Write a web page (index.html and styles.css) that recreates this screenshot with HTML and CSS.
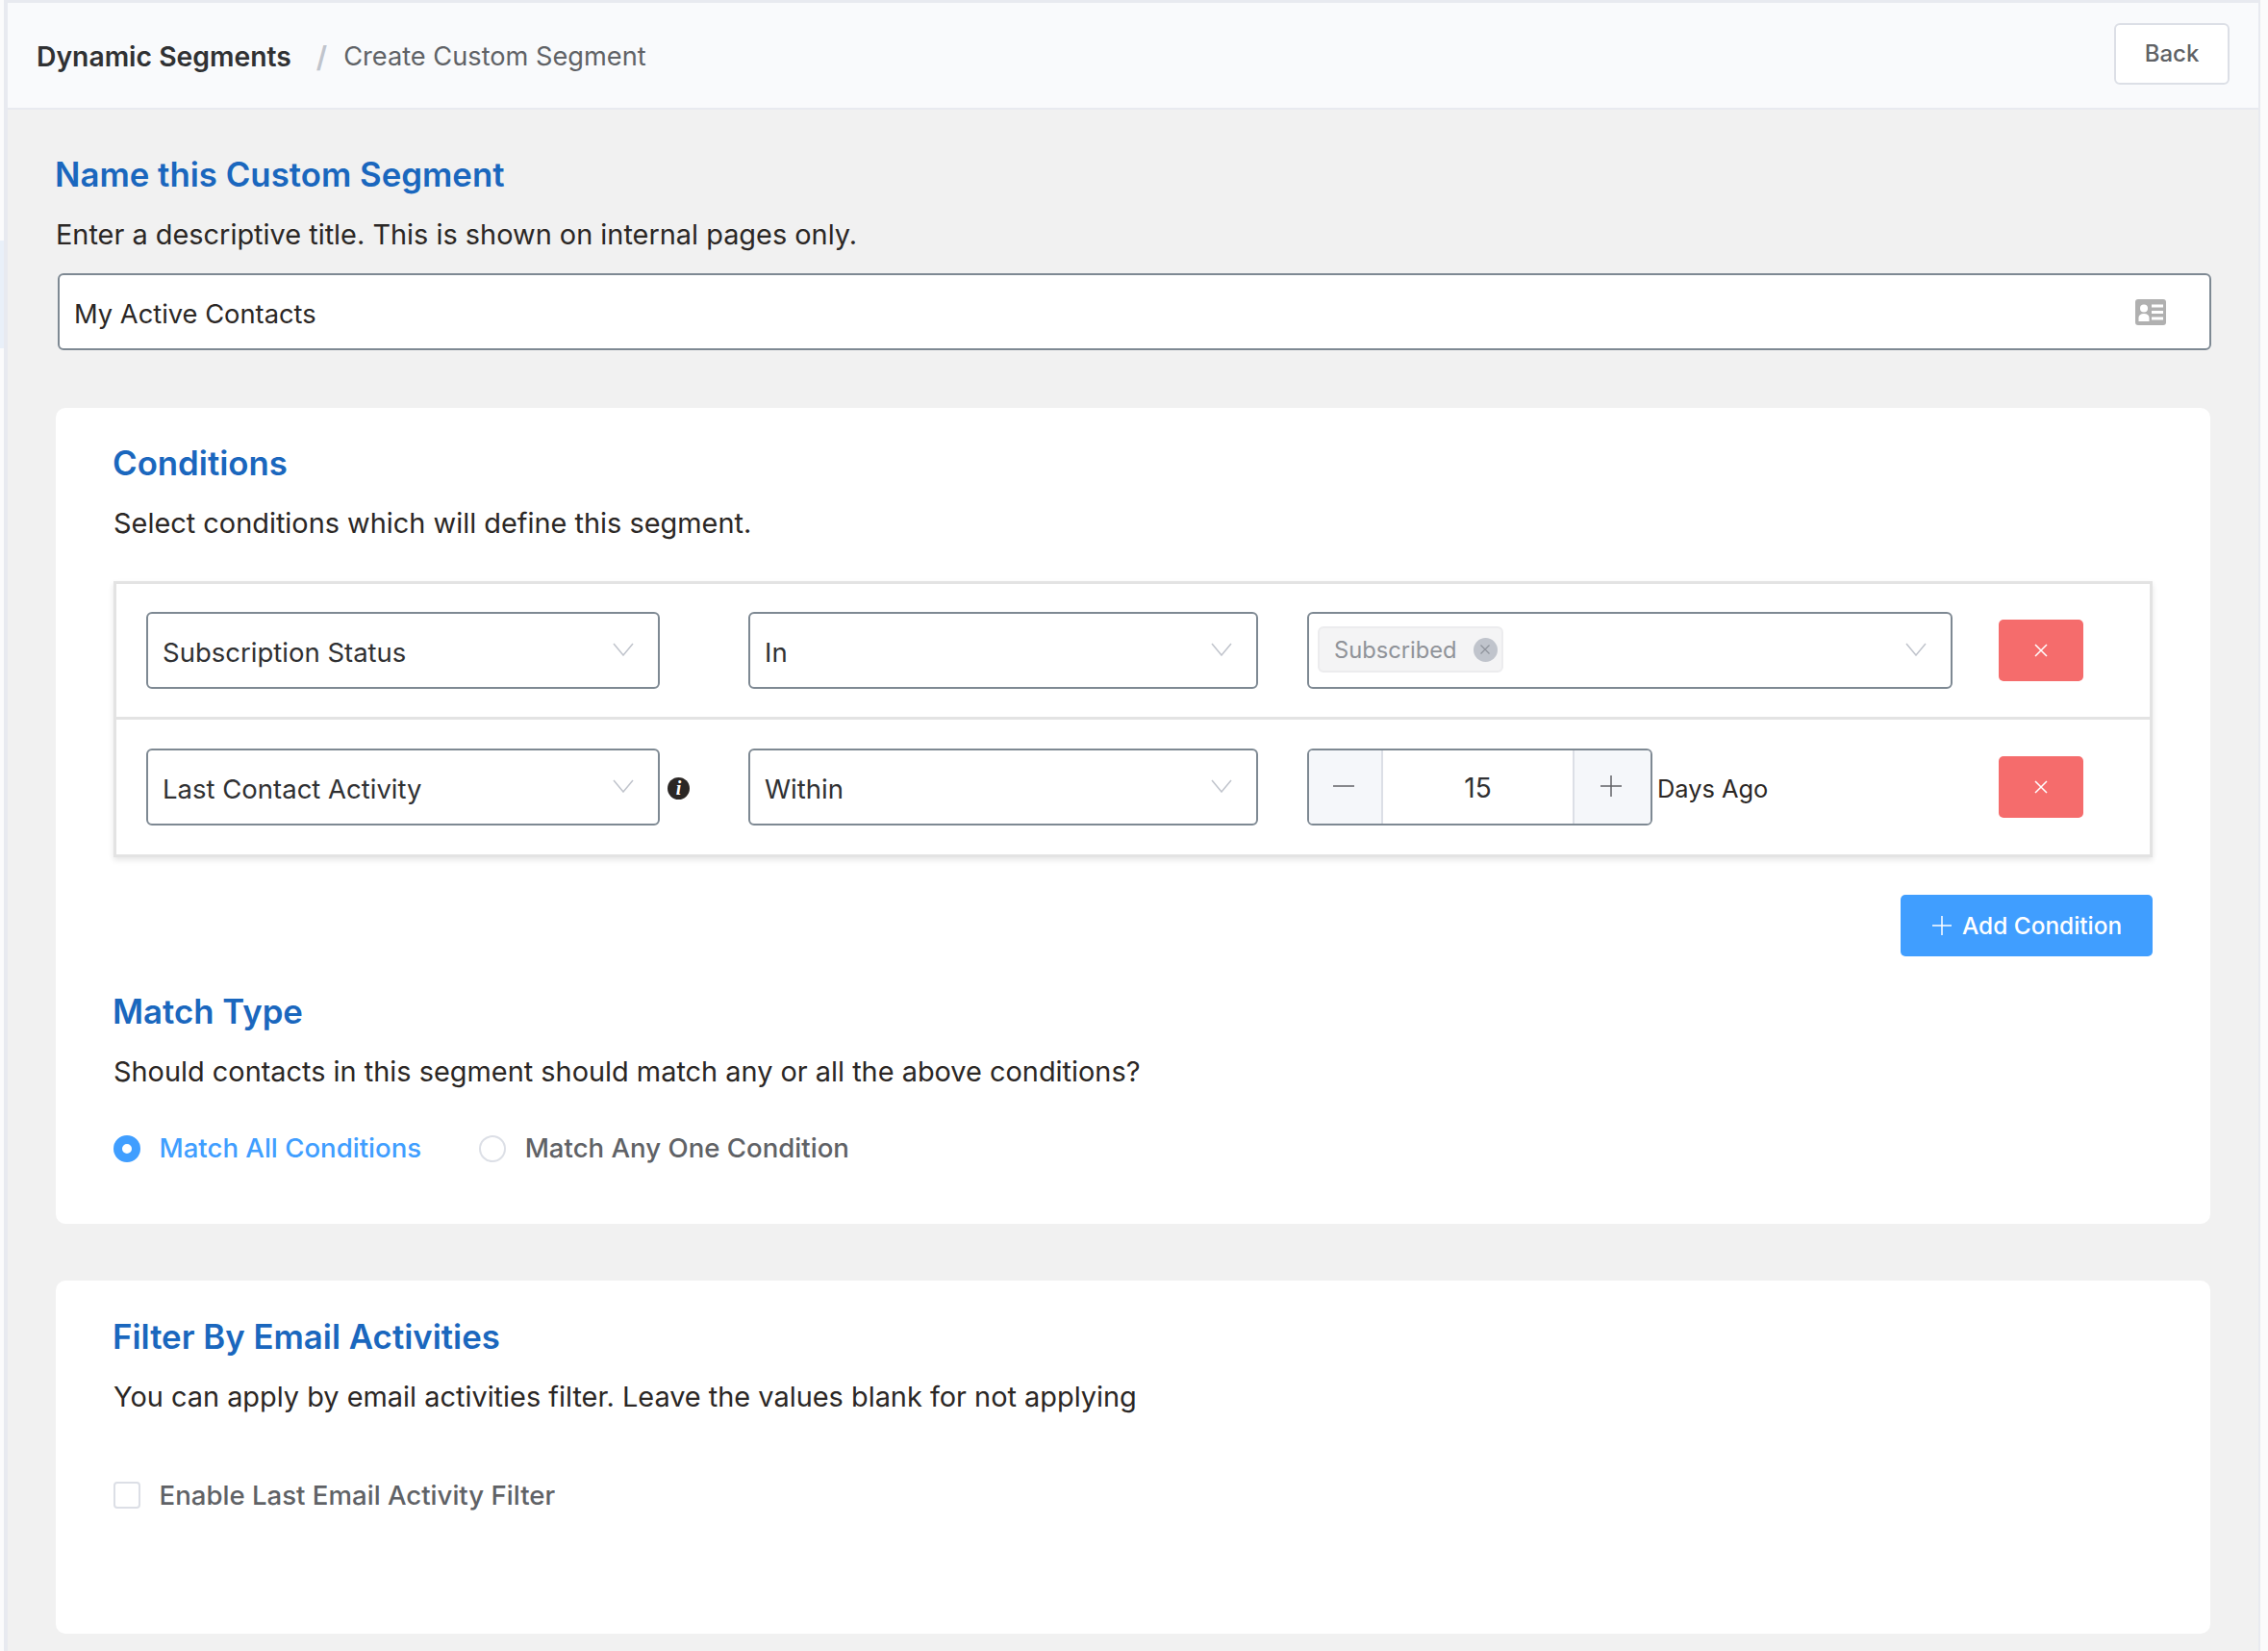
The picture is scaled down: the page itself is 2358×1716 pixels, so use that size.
FILE: index.html
```html
<!DOCTYPE html>
<html lang="en">
<head>
    <meta charset="UTF-8">
    <meta name="viewport" content="width=device-width, initial-scale=1.0">
    <title>Create Custom Segment</title>
    <link rel="stylesheet" href="styles.css">
</head>
<body>
    <div class="sliver"><div class="sliver-active"></div></div>
    <div class="page">
        <header class="topbar">
            <div class="crumbs">
                <span class="crumb-root">Dynamic Segments</span>
                <span class="crumb-sep">/</span>
                <span class="crumb-current">Create Custom Segment</span>
            </div>
            <button class="btn-back">Back</button>
        </header>

        <main class="content">
            <h2 class="title">Name this Custom Segment</h2>
            <p class="desc">Enter a descriptive title. This is shown on internal pages only.</p>
            <div class="name-input">
                <span>My Active Contacts</span>
                <svg class="card-icon" viewBox="0 0 32 27" width="32" height="27">
                    <rect width="32" height="27" rx="3" fill="#b0b0b0"/>
                    <circle cx="9" cy="9.5" r="4" fill="#fff"/>
                    <path d="M3.5 23v-3.500c0-3 2-4.500 5.500-4.500s5.500 1.500 5.500 4.500V23z" fill="#fff"/>
                    <path d="M17 5.500h12v3H17zM17 12h12v3H17zM17 18.500h12v3H17z" fill="#fff"/>
                </svg>
            </div>

            <section class="card card-conditions">
                <h2 class="title">Conditions</h2>
                <p class="desc">Select conditions which will define this segment.</p>

                <div class="rules">
                    <div class="rule">
                        <div class="col-field">
                            <div class="select select-field">
                                <span>Subscription Status</span>
                                <svg class="chevron" viewBox="0 0 22 14" width="22" height="14"><path d="M1 1l10 12L21 1" fill="none" stroke="#c0c4cc" stroke-width="1.500"/></svg>
                            </div>
                        </div>
                        <div class="col-op">
                            <div class="select select-op">
                                <span>In</span>
                                <svg class="chevron" viewBox="0 0 22 14" width="22" height="14"><path d="M1 1l10 12L21 1" fill="none" stroke="#c0c4cc" stroke-width="1.500"/></svg>
                            </div>
                        </div>
                        <div class="col-value">
                            <div class="select select-value">
                                <span class="tag">Subscribed
                                    <span class="tag-close">
                                        <svg viewBox="0 0 12 12" width="12" height="12"><path d="M1.500 1.500l9 9M10.500 1.500l-9 9" stroke="#8d929b" stroke-width="1.200"/></svg>
                                    </span>
                                </span>
                                <svg class="chevron" viewBox="0 0 22 14" width="22" height="14"><path d="M1 1l10 12L21 1" fill="none" stroke="#c0c4cc" stroke-width="1.500"/></svg>
                            </div>
                        </div>
                        <button class="btn-delete">
                            <svg viewBox="0 0 14 14" width="14" height="14"><path d="M1 1l12 12M13 1L1 13" stroke="#fff" stroke-width="1.500"/></svg>
                        </button>
                    </div>

                    <div class="rule rule-last">
                        <div class="col-field">
                            <div class="select select-field">
                                <span>Last Contact Activity</span>
                                <svg class="chevron" viewBox="0 0 22 14" width="22" height="14"><path d="M1 1l10 12L21 1" fill="none" stroke="#c0c4cc" stroke-width="1.500"/></svg>
                            </div>
                            <span class="info">i</span>
                        </div>
                        <div class="col-op">
                            <div class="select select-op">
                                <span>Within</span>
                                <svg class="chevron" viewBox="0 0 22 14" width="22" height="14"><path d="M1 1l10 12L21 1" fill="none" stroke="#c0c4cc" stroke-width="1.500"/></svg>
                            </div>
                        </div>
                        <div class="col-value">
                            <div class="stepper">
                                <span class="step step-minus">
                                    <svg viewBox="0 0 22 22" width="22" height="22"><path d="M0 11h22" stroke="#606266" stroke-width="1.500"/></svg>
                                </span>
                                <span class="step-value">15</span>
                                <span class="step step-plus">
                                    <svg viewBox="0 0 22 22" width="22" height="22"><path d="M0 11h22M11 0v22" stroke="#606266" stroke-width="1.500"/></svg>
                                </span>
                            </div>
                            <span class="unit">Days Ago</span>
                        </div>
                        <button class="btn-delete">
                            <svg viewBox="0 0 14 14" width="14" height="14"><path d="M1 1l12 12M13 1L1 13" stroke="#fff" stroke-width="1.500"/></svg>
                        </button>
                    </div>
                </div>

                <div class="add-row">
                    <button class="btn-add">
                        <svg viewBox="0 0 20 20" width="20" height="20"><path d="M0 10h20M10 0v20" stroke="#fff" stroke-width="1.500"/></svg>
                        Add Condition
                    </button>
                </div>

                <h2 class="title title-match">Match Type</h2>
                <p class="desc">Should contacts in this segment should match any or all the above conditions?</p>
                <div class="radios">
                    <label class="radio radio-on"><span class="radio-dot"></span><span class="radio-text">Match All Conditions</span></label>
                    <label class="radio"><span class="radio-dot"></span><span class="radio-text">Match Any One Condition</span></label>
                </div>
            </section>

            <section class="card card-filter">
                <h2 class="title">Filter By Email Activities</h2>
                <p class="desc">You can apply by email activities filter. Leave the values blank for not applying</p>
                <label class="check"><span class="check-box"></span>Enable Last Email Activity Filter</label>
            </section>
        </main>
    </div>
</body>
</html>
```

FILE: styles.css
```css
* {
    box-sizing: border-box;
}

body {
    margin: 0;
    display: flex;
    min-height: 1716px;
    background-color: #fbfbfc;
    font-family: Inter, "Noto Sans", sans-serif;
    color: #2b2725;
}

.sliver {
    width: 4px;
    flex-shrink: 0;
    padding-top: 250px;
}

.sliver-active {
    height: 112px;
    background-color: #e9f0f9;
}

.page {
    width: 2346px;
    background-color: #f1f1f1;
    border-top: 3px solid #e8eaf0;
    border-left: 4px solid #e8eaf0;
    border-right: 2px solid #e8eaf0;
}

.topbar {
    height: 111px;
    display: flex;
    justify-content: space-between;
    align-items: flex-start;
    padding: 21px 30px 0 30px;
    background-color: #f9fafc;
    border-bottom: 2px solid #e8eaf0;
}

.crumbs {
    display: flex;
    align-items: center;
    height: 69px;
}

.crumb-root {
    font-size: 28.3px;
    font-weight: 600;
    color: #303133;
}

.crumb-sep {
    margin: 0 17px 0 26px;
    color: #c0c4cc;
    font-weight: 600;
    font-size: 30px;
}

.crumb-current {
    font-size: 27.2px;
    color: #606266;
}

.btn-back {
    width: 120px;
    height: 64px;
    margin: 0;
    padding: 0 0 2px;
    background-color: #fff;
    border: 2px solid #dcdfe6;
    border-radius: 6px;
    font-family: inherit;
    font-size: 24px;
    font-weight: 500;
    color: #606266;
}

.content {
    padding: 45px 50px 0;
}

.title {
    margin: 0 0 0 -1px;
    font-size: 34.8px;
    line-height: 44px;
    font-weight: 600;
    color: #1a67be;
}

.desc {
    margin: 21px 0 0;
    font-size: 28.9px;
    line-height: 40px;
}

.name-input {
    display: flex;
    align-items: center;
    justify-content: space-between;
    height: 80px;
    margin: 20px -1px 0 2px;
    padding: 4px 45px 0 15px;
    background-color: #fff;
    border: 2px solid #7e8993;
    border-radius: 6px;
    font-size: 27.3px;
}

.card-icon {
    margin-top: -4px;
}

.card {
    background-color: #fff;
    border-radius: 10px;
    padding: 35px 60px 0;
}

.card-conditions {
    height: 848px;
    margin-top: 60px;
}

.card-filter {
    height: 367px;
    margin-top: 59px;
    padding-top: 36px;
}

.rules {
    margin-top: 40px;
    border: 3px solid #e3e3e3;
    box-shadow: 0 3px 6px rgba(0, 0, 0, 0.1);
}

.rule {
    display: flex;
    align-items: center;
    height: 141px;
    padding-left: 31px;
    border-bottom: 3px solid #e3e3e3;
}

.rule-last {
    height: 140px;
    border-bottom: none;
}

.col-field {
    display: flex;
    align-items: center;
    width: 626px;
    flex-shrink: 0;
}

.col-op {
    width: 581px;
    flex-shrink: 0;
}

.col-value {
    display: flex;
    align-items: center;
    width: 719px;
    flex-shrink: 0;
}

.select {
    display: flex;
    align-items: center;
    justify-content: space-between;
    height: 80px;
    padding: 0 25px 0 15px;
    background-color: #fff;
    border: 2px solid #7e8993;
    border-radius: 6px;
    font-size: 27.5px;
    color: #303133;
}

.select > span:first-child:not(.tag) {
    padding-top: 3px;
}

.select-field {
    width: 534px;
}

.select-op {
    width: 530px;
}

.select-value {
    width: 671px;
    padding-left: 9px;
}

.chevron {
    margin-bottom: 3px;
}

.tag {
    display: flex;
    align-items: center;
    height: 48px;
    margin-bottom: 2px;
    padding: 0 4px 0 15px;
    background-color: #f4f4f5;
    border: 2px solid #ececee;
    border-radius: 6px;
    font-size: 23.7px;
    color: #909399;
}

.tag-close {
    display: flex;
    align-items: center;
    justify-content: center;
    width: 25px;
    height: 25px;
    margin-left: 17px;
    border-radius: 50%;
    background-color: #c0c4cc;
}

.info {
    display: flex;
    align-items: center;
    justify-content: center;
    width: 23px;
    height: 23px;
    margin: 2px 0 0 8px;
    border-radius: 50%;
    background-color: #2b2725;
    color: #fff;
    font-family: "Liberation Serif", serif;
    font-size: 20px;
    font-style: italic;
    font-weight: 700;
}

.stepper {
    display: flex;
    width: 359px;
    height: 80px;
    background-color: #fff;
    border: 2px solid #7e8993;
    border-radius: 6px;
    overflow: hidden;
}

.step {
    display: flex;
    align-items: center;
    justify-content: center;
    padding: 0 4px 3px 0;
    background-color: #f5f7fa;
    flex-shrink: 0;
}

.step-minus {
    width: 77px;
    border-right: 2px solid #dcdfe6;
}

.step-plus {
    width: 81px;
    border-left: 2px solid #dcdfe6;
}

.step-value {
    flex: 1;
    text-align: center;
    font-size: 28px;
    line-height: 78px;
    color: #303133;
}

.unit {
    margin-left: 5px;
    padding-top: 2px;
    font-size: 25.4px;
}

.btn-delete {
    display: flex;
    align-items: center;
    justify-content: center;
    width: 88px;
    height: 64px;
    margin: 0;
    padding: 0;
    background-color: #f56c6c;
    border: none;
    border-radius: 5px;
}

.add-row {
    display: flex;
    justify-content: flex-end;
    margin-top: 39px;
}

.btn-add {
    display: flex;
    align-items: center;
    gap: 11px;
    height: 64px;
    width: 262px;
    margin: 0;
    padding: 0 0 0 33px;
    background-color: #409eff;
    border: none;
    border-radius: 5px;
    font-family: inherit;
    font-size: 24.4px;
    font-weight: 500;
    color: #fff;
}

.title-match {
    margin-top: 35px;
}

.radios {
    display: flex;
    gap: 60px;
    margin-top: 46px;
}

.radio,
.check {
    display: flex;
    align-items: center;
    height: 28px;
    font-size: 27.6px;
    font-weight: 500;
    color: #606266;
}

.radio-text {
    margin-bottom: 3px;
}

.radio-dot {
    width: 28px;
    height: 28px;
    margin-right: 19.5px;
    border: 2px solid #dcdfe6;
    border-radius: 50%;
    background-color: #fff;
}

.radio-on {
    color: #409eff;
}

.radio-on .radio-dot {
    border: 9px solid #409eff;
}

.check {
    margin-top: 68px;
}

.check-box {
    width: 28px;
    height: 28px;
    margin-right: 19.5px;
    border: 2px solid #dcdfe6;
    border-radius: 4px;
    background-color: #fff;
}
```
